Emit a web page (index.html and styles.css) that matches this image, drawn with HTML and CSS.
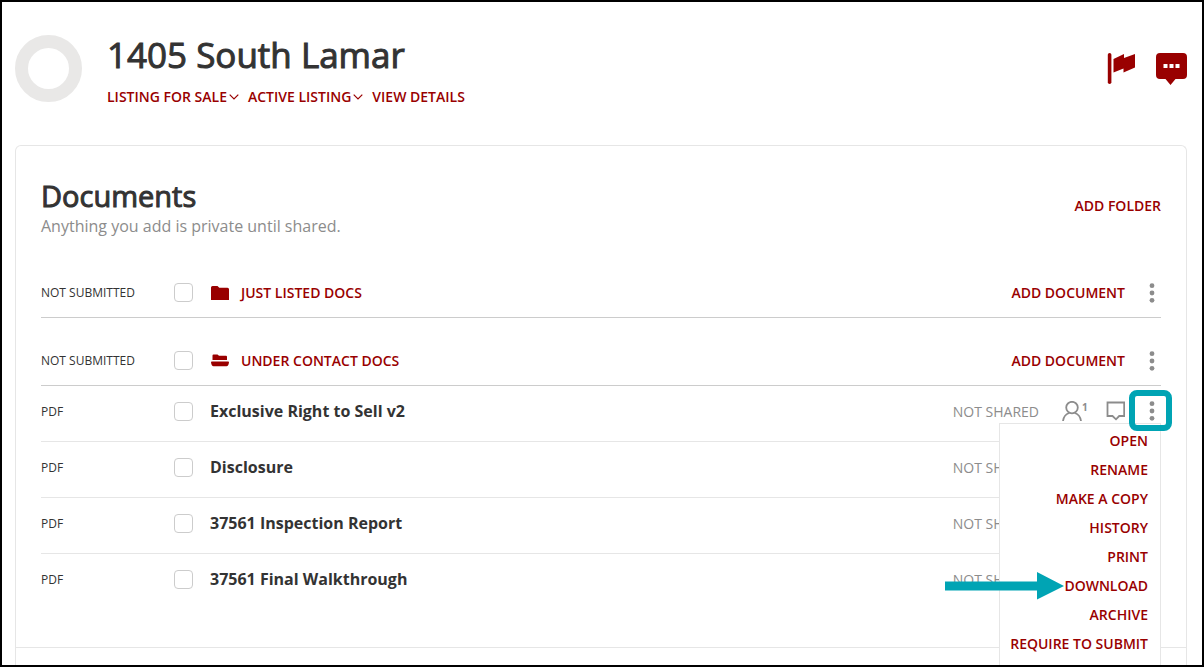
FILE: index.html
```html
<!DOCTYPE html>
<html lang="en">
  <head>
    <meta charset="UTF-8" />
    <meta name="viewport" content="width=device-width, initial-scale=1.0" />
    <title>1405 South Lamar</title>
    <link rel="stylesheet" href="styles.css" />
  </head>
  <body>
    <svg class="sprite" aria-hidden="true">
      <symbol id="chevron" viewBox="0 0 10 6">
        <path d="M.7.7 5 5 9.300.7" fill="none" stroke="currentColor" stroke-width="1.2" />
      </symbol>
      <symbol id="dots" viewBox="0 0 6 20">
        <circle cx="3" cy="2.7" r="2.4" />
        <circle cx="3" cy="10" r="2.4" />
        <circle cx="3" cy="17.3" r="2.4" />
      </symbol>
      <symbol id="person" viewBox="0 0 20 20">
        <g fill="none" stroke="currentColor" stroke-width="1.8">
          <circle cx="10" cy="6.6" r="5.8" />
          <path d="M1 20c.6-4.800 3.200-7 6.200-8M19 20c-.6-4.800-3.200-7-6.200-8" />
        </g>
      </symbol>
      <symbol id="comment" viewBox="0 0 20 20">
        <path d="M2.500 1.500h16.700v13.500h-5L11 18.300 7.500 15h-5z" fill="none" stroke="currentColor" stroke-width="1.8" />
      </symbol>
    </svg>

    <header class="header">
      <div class="progress"></div>
      <div class="header-text">
        <h1 class="title">1405 South Lamar</h1>
        <nav class="links">
          <button type="button" class="link">LISTING FOR SALE<svg class="chevron"><use href="#chevron" /></svg></button>
          <button type="button" class="link">ACTIVE LISTING<svg class="chevron"><use href="#chevron" /></svg></button>
          <a href="#" class="link">VIEW DETAILS</a>
        </nav>
      </div>
      <div class="header-icons">
        <button type="button" class="icon-button" aria-label="Flag">
          <svg width="28" height="32" viewBox="0 0 28 32">
            <rect x=".8" y="0" width="3.600" height="31" rx="1.800" />
            <path d="M6.500 6 17 1v4l11-4v13.500L16.500 19.500v-4L6.500 19.500z" />
          </svg>
        </button>
        <button type="button" class="icon-button" aria-label="Messages">
          <svg width="31" height="32" viewBox="0 0 31 32">
            <path d="M4 0h23a4 4 0 0 1 4 4v18a4 4 0 0 1-4 4h-7.500L14.500 32 9.500 26H4a4 4 0 0 1-4-4V4a4 4 0 0 1 4-4z" />
            <path d="M7.500 11h4v4h-4zM13.500 11h4v4h-4zM19.500 11h4v4h-4z" fill="#fff" />
          </svg>
        </button>
      </div>
    </header>

    <main class="card">
      <section class="documents">
        <div class="documents-head">
          <div>
            <h2 class="heading">Documents</h2>
            <p class="hint">Anything you add is private until shared.</p>
          </div>
          <button type="button" class="link">ADD FOLDER</button>
        </div>

        <div class="row folder-row">
          <span class="status">NOT SUBMITTED</span>
          <input type="checkbox" class="check" aria-label="Just listed docs" />
          <a href="#" class="link">
            <svg class="folder-icon" width="18" height="16" viewBox="0 0 18 16">
              <path d="M0 2.500A1.500 1.500 0 0 1 1.500 1h5L8.300 2.800H16.500A1.500 1.500 0 0 1 18 4.300V15H0z" />
            </svg>
            JUST LISTED DOCS
          </a>
          <div class="actions">
            <button type="button" class="link">ADD DOCUMENT</button>
            <button type="button" class="more" aria-label="More"><svg class="dots"><use href="#dots" /></svg></button>
          </div>
        </div>

        <div class="row folder-row">
          <span class="status">NOT SUBMITTED</span>
          <input type="checkbox" class="check" aria-label="Under contact docs" />
          <a href="#" class="link">
            <svg class="folder-icon" width="18" height="16" viewBox="0 0 18 16">
              <path d="M1.500 7V2.500Q1.500 1.500 2.500 1.500h4L8 2.800h7Q16 2.800 16 3.800V7zM.8 8.500h16.400q.8 0 .8.800-.5 4-2.500 4h-13Q.5 13.300 0 9.300q0-.8.8-.8z" />
            </svg>
            UNDER CONTACT DOCS
          </a>
          <div class="actions">
            <button type="button" class="link">ADD DOCUMENT</button>
            <button type="button" class="more" aria-label="More"><svg class="dots"><use href="#dots" /></svg></button>
          </div>
        </div>

        <div class="row doc-row">
          <span class="status">PDF</span>
          <input type="checkbox" class="check" id="doc1" />
          <label class="name" for="doc1">Exclusive Right to Sell v2</label>
          <div class="actions">
            <span class="shared">NOT SHARED</span>
            <button type="button" class="people" aria-label="People"><svg class="small-icon"><use href="#person" /></svg><sup class="count">1</sup></button>
            <button type="button" class="comments" aria-label="Comments"><svg class="small-icon"><use href="#comment" /></svg></button>
            <div class="more-wrap">
              <button type="button" class="more" aria-label="More"><svg class="dots"><use href="#dots" /></svg></button>
              <ul class="menu">
                <li><a href="#" class="link">OPEN</a></li>
                <li><a href="#" class="link">RENAME</a></li>
                <li><a href="#" class="link">MAKE A COPY</a></li>
                <li><a href="#" class="link">HISTORY</a></li>
                <li><a href="#" class="link">PRINT</a></li>
                <li>
                  <a href="#" class="link">DOWNLOAD</a>
                  <svg class="arrow" width="119" height="28" viewBox="0 0 119 28">
                    <path d="M0 9.500h92V0l27 14-27 13.500v-9H0z" />
                  </svg>
                </li>
                <li><a href="#" class="link">ARCHIVE</a></li>
                <li><a href="#" class="link">REQUIRE TO SUBMIT</a></li>
              </ul>
              <span class="highlight"></span>
            </div>
          </div>
        </div>

        <div class="row doc-row">
          <span class="status">PDF</span>
          <input type="checkbox" class="check" id="doc2" />
          <label class="name" for="doc2">Disclosure</label>
          <div class="actions">
            <span class="shared covered">NOT SHARED</span>
          </div>
        </div>

        <div class="row doc-row">
          <span class="status">PDF</span>
          <input type="checkbox" class="check" id="doc3" />
          <label class="name" for="doc3">37561 Inspection Report</label>
          <div class="actions">
            <span class="shared covered">NOT SHARED</span>
          </div>
        </div>

        <div class="row doc-row">
          <span class="status">PDF</span>
          <input type="checkbox" class="check" id="doc4" />
          <label class="name" for="doc4">37561 Final Walkthrough</label>
          <div class="actions">
            <span class="shared covered">NOT SHARED</span>
          </div>
        </div>
      </section>
      <section class="next-section"></section>
    </main>
  </body>
</html>
```

FILE: styles.css
```css
* {
  box-sizing: border-box;
}
html {
  overflow: hidden;
}
body {
  display: flex;
  flex-direction: column;
  position: relative;
  height: 100vh;
  margin: 0;
  padding: 0 15px 0 13px;
  border: 2px solid #000;
  overflow: hidden;
  background: #fff;
  color: #333;
  font-family: "Open Sans", sans-serif;
  font-size: 14px;
}
button {
  padding: 0;
  border: 0;
  background: none;
  font-family: inherit;
  cursor: pointer;
}
svg {
  display: block;
  fill: currentColor;
}
.sprite {
  position: absolute;
  width: 0;
  height: 0;
}
.link {
  display: inline-flex;
  align-items: center;
  color: #900;
  font-size: 14px;
  font-weight: 600;
  line-height: 18px;
  text-decoration: none;
  white-space: nowrap;
}

/* header */
.header {
  display: flex;
  align-items: flex-start;
  padding-top: 33px;
}
.progress {
  width: 67px;
  height: 67px;
  border: 13px solid #e9e8e7;
  border-radius: 50%;
}
.header-text {
  flex: 1;
  margin-left: 25px;
}
.title {
  margin: 0 0 13px;
  font-size: 35px;
  font-weight: 400;
  line-height: 40px;
  -webkit-text-stroke: 1px #333;
}
.links {
  display: flex;
  gap: 9px;
}
.chevron {
  width: 10px;
  height: 6px;
  margin-left: 2px;
}
.header-icons {
  display: flex;
  gap: 21px;
  padding-top: 18px;
}
.icon-button {
  color: #900;
}

/* documents */
.card {
  flex: 1;
  min-height: 0;
  margin-top: 39px;
  border: 1px solid #e6e6e6;
  border-bottom: 0;
  border-radius: 6px 6px 0 0;
}
.documents {
  padding: 30px 25px 37px;
  border-bottom: 1px solid #e6e6e6;
}
.documents-head {
  display: flex;
  align-items: center;
  justify-content: space-between;
  margin-bottom: 32px;
}
.heading {
  margin: 0;
  font-size: 29px;
  font-weight: 400;
  line-height: 40px;
  -webkit-text-stroke: 1px #333;
}
.hint {
  margin: 0;
  color: #8c8c8c;
  font-size: 16px;
  line-height: 20px;
}
.row {
  display: flex;
  align-items: center;
  border-bottom: 1px solid #e6e6e6;
}
.folder-row {
  height: 50px;
  margin-top: 18px;
  border-color: #ccc;
}
.doc-row {
  height: 56px;
  padding-bottom: 5px;
}
.doc-row:last-child {
  border-color: transparent;
}
.status {
  width: 133px;
  font-size: 12px;
}
.check {
  width: 19px;
  height: 19px;
  margin: 0 17px 0 0;
  border: 1px solid #ccc;
  border-radius: 4px;
  background: #fff;
  appearance: none;
}
.check:checked {
  background: #900;
}
.folder-icon {
  margin: 0 12px 0 1px;
}
.name {
  font-size: 16px;
  font-weight: 700;
}
.actions {
  display: flex;
  align-items: center;
  margin-left: auto;
}
.more {
  display: flex;
  justify-content: center;
  width: 18px;
  margin-left: 18px;
  color: #8c8c8c;
}
.dots {
  width: 6px;
  height: 20px;
}
.shared {
  color: #8c8c8c;
  font-size: 14px;
}
.covered {
  margin-right: 122px;
}
.people,
.comments {
  display: flex;
  color: #8c8c8c;
}
.people {
  margin-left: 23px;
}
.comments {
  margin-left: 18px;
}
.small-icon {
  width: 20px;
  height: 20px;
}
.count {
  width: 5px;
  font-size: 10px;
  font-weight: 700;
  line-height: 12px;
}

/* menu */
.more-wrap {
  position: relative;
}
.menu {
  position: absolute;
  top: 22px;
  right: 0;
  z-index: 1;
  margin: 0;
  padding: 2px 12px 12px 10px;
  border: 1px solid #e6e6e6;
  background: #fff;
  list-style: none;
  text-align: right;
}
.menu li {
  position: relative;
  height: 29px;
}
.menu .link {
  line-height: 29px;
}
.arrow {
  position: absolute;
  top: 1px;
  right: 84px;
  color: #00a4b4;
}
.highlight {
  position: absolute;
  top: -11px;
  right: -11px;
  z-index: 2;
  width: 43px;
  height: 41px;
  border: 6px solid #00a4b4;
  border-radius: 8px;
  pointer-events: none;
}
```
